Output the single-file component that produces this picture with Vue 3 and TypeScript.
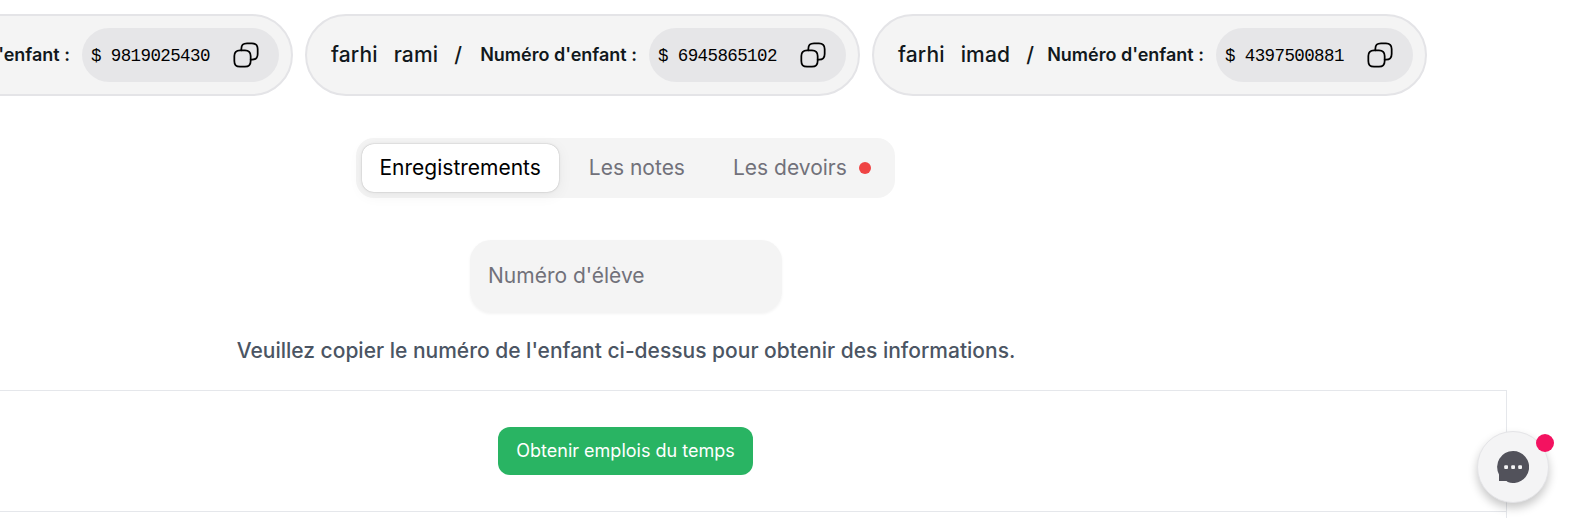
<script setup lang="ts">
interface Child {
  last: string
  first: string
  code: string
}

const children: Child[] = [
  { last: '', first: '', code: '9819025430' },
  { last: 'farhi', first: 'rami', code: '6945865102' },
  { last: 'farhi', first: 'imad', code: '4397500881' },
]
</script>

<template>
  <div class="viewport">
    <main class="page">
      <section class="children">
        <article v-for="child in children" :key="child.code" class="child">
          <div v-if="child.last" class="names">
            <span>{{ child.last }}</span>
            <span class="first">{{ child.first }}</span>
            <span class="slash">/</span>
          </div>
          <span class="label">Numéro d'enfant :</span>
          <div class="snippet">
            <pre class="code">$ {{ child.code }}</pre>
            <button class="copy" type="button" aria-label="Copier">
              <svg viewBox="0 0 24 24" width="28" height="28" fill="none" stroke="currentColor" stroke-width="1.5" stroke-linecap="round" stroke-linejoin="round">
                <path d="M16 17.1c0 3.5-1.4 4.9-4.9 4.9H6.9C3.400 22 2 20.600 2 17.100v-4.200C2 9.400 3.400 8 6.900 8h4.200c3.500 0 4.900 1.400 4.900 4.900Z" />
                <path d="M8 8V6.900C8 3.400 9.400 2 12.900 2h4.200C20.600 2 22 3.400 22 6.900v4.200c0 3.500-1.400 4.900-4.900 4.900H16" />
              </svg>
            </button>
          </div>
        </article>
      </section>

      <nav class="tabs">
        <button class="tab active" type="button">Enregistrements</button>
        <button class="tab" type="button">Les notes</button>
        <button class="tab" type="button">Les devoirs<i class="dot"></i></button>
      </nav>

      <input class="field" type="text" placeholder="Numéro d'élève" />
      <p class="hint">Veuillez copier le numéro de l'enfant ci-dessus pour obtenir des informations.</p>

      <section class="schedule">
        <div class="row">
          <button class="fetch" type="button">Obtenir emplois du temps</button>
        </div>
        <div class="row rest"></div>
      </section>
    </main>

    <button class="chat" type="button" aria-label="Messages">
      <svg viewBox="0 0 32 32" width="32" height="32">
        <path fill="#52525b" d="M16 0a16 16 0 1 1-5.200 31.100L9.500 30H2v-6.500A16 16 0 0 1 16 0Z" />
        <g fill="#f4f4f5">
          <rect x="7.200" y="14.200" width="3.800" height="3.800" rx="1" />
          <rect x="14.200" y="14.200" width="3.800" height="3.800" rx="1" />
          <rect x="21.200" y="14.200" width="3.800" height="3.800" rx="1" />
        </g>
      </svg>
      <span class="badge"></span>
    </button>
  </div>
</template>

<style>
html,
body {
  background: #fff;
  overflow: hidden;
}
</style>

<style scoped>
.viewport {
  position: relative;
  width: 1573px;
  height: 518px;
  overflow: hidden;
  font-family: Inter, "Liberation Sans", sans-serif;
  color: #11181c;
}
button,
input {
  border: 0;
  margin: 0;
  font-family: inherit;
}
.page {
  display: flex;
  flex-direction: column;
  align-items: center;
  box-sizing: border-box;
  width: 1762px;
  height: 518px;
  margin-left: -255px;
  padding-top: 14px;
}
.children {
  align-self: stretch;
  display: flex;
  flex: none;
  justify-content: flex-end;
  gap: 12px;
  padding-right: 80px;
}
.child {
  display: flex;
  align-items: center;
  box-sizing: border-box;
  flex: none;
  width: 555px;
  height: 82px;
  padding: 0 12px 0 24px;
  border: 2px solid #e4e4e7;
  border-radius: 41px;
  background: #f4f4f4;
  white-space: nowrap;
}
.names {
  display: flex;
  padding-bottom: 2px;
  font-size: 21px;
  font-weight: 500;
  letter-spacing: 0.15px;
}
.first {
  margin-left: 16px;
}
.slash {
  margin-left: 16px;
}
.label {
  margin-left: auto;
  padding-bottom: 1px;
  font-size: 18px;
  font-weight: 600;
}
.snippet {
  display: flex;
  align-items: center;
  justify-content: space-between;
  box-sizing: border-box;
  width: 197px;
  height: 54px;
  margin-left: 12px;
  padding: 0 19px 0 9px;
  border-radius: 27px;
  background: #e6e6e8;
}
.code {
  margin: 0;
  padding-top: 2px;
  font: 17.5px "Liberation Mono", monospace;
  letter-spacing: -0.6px;
  color: #000;
}
.copy {
  display: flex;
  padding: 0;
  background: none;
  color: #000;
}
.tabs {
  display: flex;
  flex: none;
  align-items: center;
  box-sizing: border-box;
  width: 539px;
  height: 59.5px;
  margin-top: 42px;
  margin-right: 2px;
  padding: 0 6px;
  border-radius: 18px;
  background: #f4f4f4;
}
.tab {
  display: flex;
  align-items: center;
  box-sizing: border-box;
  height: 48px;
  padding: 0 18px 1px;
  border-radius: 12px;
  background: none;
  color: #71717a;
  font-size: 21px;
  white-space: nowrap;
}
.tab + .tab {
  margin-left: 12px;
}
.active {
  background: #fff;
  color: #000;
  box-shadow: 0 0 7px rgb(0 0 0 / 2%), 0 3px 15px rgb(0 0 0 / 6%), 0 0 1.5px rgb(0 0 0 / 30%);
}
.dot {
  width: 12px;
  height: 12px;
  margin: 1px 0 0 12px;
  border-radius: 50%;
  background: #ef4444;
}
.field {
  box-sizing: border-box;
  flex: none;
  width: 312px;
  height: 72px;
  margin-top: 42px;
  padding: 0 18px 1px;
  border-radius: 21px;
  background: #f4f4f4;
  box-shadow: 0 1.5px 3px rgb(0 0 0 / 5%);
  font-size: 21px;
}
.field::placeholder {
  color: #71717a;
  opacity: 1;
}
.hint {
  margin: 24.5px 0 24px;
  font-size: 21px;
  font-weight: 500;
  line-height: 30px;
  color: #4b5563;
  white-space: nowrap;
}
.schedule {
  align-self: stretch;
  flex: 1;
  border-top: 1px solid #e5e7eb;
  border-right: 1px solid #e5e7eb;
}
.row {
  display: flex;
  align-items: center;
  justify-content: center;
  height: 120px;
}
.rest {
  height: 5px;
  border-top: 1px solid #e5e7eb;
}
.fetch {
  width: 255px;
  height: 48px;
  padding: 0 0 1px;
  border-radius: 12px;
  background: #29b463;
  color: #fff;
  font-size: 18px;
  white-space: nowrap;
}
.chat {
  position: absolute;
  left: 1477px;
  top: 431px;
  display: flex;
  align-items: center;
  justify-content: center;
  box-sizing: border-box;
  width: 72px;
  height: 72px;
  padding: 0;
  border: 1px solid #e4e4e7;
  border-radius: 50%;
  background: #f4f4f5;
  box-shadow: 0 5px 10px rgb(0 0 0 / 22%);
}
.badge {
  position: absolute;
  left: 58px;
  top: 2px;
  width: 18px;
  height: 18px;
  border-radius: 50%;
  background: #f31260;
}
</style>
